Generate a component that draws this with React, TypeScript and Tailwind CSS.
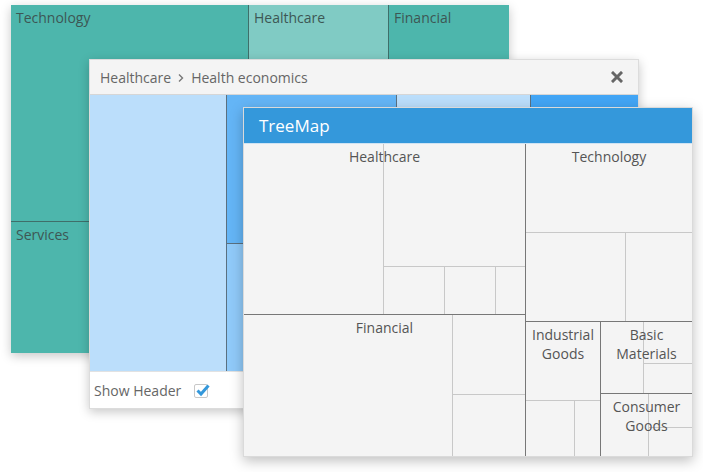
import React from 'react';

const font = { fontFamily: '"Open Sans", "Noto Sans", sans-serif' };

// group label centred on top of a treemap group
const Label = ({ text, className = '' }: { text: string; className?: string }) => (
  <div className={`pointer-events-none absolute inset-x-0 top-0 pt-[3px] text-center text-[14px] leading-[19px] text-[#555] ${className}`}>
    {text}
  </div>
);

const Leaf = ({ className = '' }: { className?: string }) => <div className={`bg-[#f4f4f4] ${className}`} />;

const TealWindow = () => (
  <div className="absolute left-[11px] top-[5px] flex h-[348px] w-[498px] gap-px bg-[#3f6f6a] shadow-[0_3px_10px_rgba(0,0,0,0.22)]">
    <div className="flex w-[237px] flex-col gap-px">
      <div className="h-[216px] bg-[#4db6ac] px-[5px] pt-[3px] text-[14px] leading-[19px] text-[#3d5754]">Technology</div>
      <div className="flex-1 bg-[#4db6ac] px-[5px] pt-[3px] text-[14px] leading-[19px] text-[#3d5754]">Services</div>
    </div>
    <div className="w-[139px] bg-[#80cbc4] px-[5px] pt-[3px] text-[14px] leading-[19px] text-[#3d5754]">Healthcare</div>
    <div className="flex-1 bg-[#4db6ac] px-[5px] pt-[3px] text-[14px] leading-[19px] text-[#3d5754]">Financial</div>
  </div>
);

const BlueWindow = () => (
  <div className="absolute left-[89px] top-[59px] flex h-[350px] w-[550px] flex-col border border-[#dcdcdc] bg-white shadow-[0_3px_10px_rgba(0,0,0,0.22)]">
    <div className="flex h-[35px] items-center justify-between border-b border-[#d6d6d6] bg-[#f4f4f4] pl-[10px] pr-[15px] text-[14px] text-[#666]">
      <div className="flex items-center gap-[6px]">
        <span>Healthcare</span>
        <svg width="8" height="10" viewBox="0 0 8 10" className="mt-px">
          <path d="M2 1.5 L5.5 5 L2 8.5" fill="none" stroke="#777" strokeWidth="1.4" />
        </svg>
        <span>Health economics</span>
      </div>
      <svg width="12" height="12" viewBox="0 0 12 12">
        <path d="M2 2 L10 10 M10 2 L2 10" stroke="#666" strokeWidth="3" strokeLinecap="square" />
      </svg>
    </div>
    <div className="flex h-[276px] gap-px bg-[#5a7080]">
      <div className="w-[136px] bg-[#bbdefb]" />
      <div className="flex w-[169px] flex-col gap-px">
        <div className="h-[148px] bg-[#64b5f6]" />
        <div className="flex-1 bg-[#90caf9]" />
      </div>
      <div className="w-[133px] bg-[#bbdefb]" />
      <div className="flex-1 bg-[#42a5f5]" />
    </div>
    <div className="flex flex-1 items-center border-t border-[#e2e2e2] pl-[4px] text-[14px] text-[#666]">
      <span>Show Header</span>
      <span className="relative ml-[13px] mt-px h-[14px] w-[14px] rounded-[2px] border border-[#c8c8c8] bg-white">
        <svg width="16" height="14" viewBox="0 0 16 14" className="absolute left-[0px] top-[-2px]">
          <path d="M2.5 7.5 L6 11 L13.5 2.5" fill="none" stroke="#3498db" strokeWidth="3" />
        </svg>
      </span>
    </div>
  </div>
);

const FrontWindow = () => (
  <div className="absolute left-[243px] top-[107px] flex h-[350px] w-[450px] flex-col border border-[#dadada] bg-[#f4f4f4] shadow-[0_4px_12px_rgba(0,0,0,0.25)]">
    <div className="flex h-[36px] items-center border-b border-[#cfe3f3] bg-[#3498db] pl-[15px] text-[17px] text-white">TreeMap</div>
    <div className="flex flex-1 gap-px bg-[#777]">
      {/* left column */}
      <div className="flex w-[281px] flex-col gap-px">
        <div className="relative flex h-[170px] gap-px bg-[#c8c8c8]">
          <Leaf className="w-[139px]" />
          <div className="flex flex-1 flex-col gap-px">
            <Leaf className="h-[122px]" />
            <div className="flex flex-1 gap-px">
              <Leaf className="w-[60px]" />
              <Leaf className="w-[50px]" />
              <Leaf className="flex-1" />
            </div>
          </div>
          <Label text="Healthcare" />
        </div>
        <div className="relative flex flex-1 gap-px bg-[#c8c8c8]">
          <Leaf className="w-[208px]" />
          <div className="flex flex-1 flex-col gap-px">
            <Leaf className="h-[79px]" />
            <Leaf className="flex-1" />
          </div>
          <Label text="Financial" />
        </div>
      </div>
      {/* right column */}
      <div className="flex flex-1 flex-col gap-px">
        <div className="relative flex h-[177px] flex-col gap-px bg-[#c8c8c8]">
          <Leaf className="h-[88px]" />
          <div className="flex flex-1 gap-px">
            <Leaf className="w-[99px]" />
            <Leaf className="flex-1" />
          </div>
          <Label text="Technology" />
        </div>
        <div className="flex flex-1 gap-px">
          <div className="relative flex w-[74px] flex-col gap-px bg-[#c8c8c8]">
            <Leaf className="h-[78px]" />
            <div className="flex flex-1 gap-px">
              <Leaf className="w-[48px]" />
              <Leaf className="flex-1" />
            </div>
            <Label text="Industrial Goods" />
          </div>
          <div className="flex flex-1 flex-col gap-px">
            <div className="relative flex h-[71px] gap-px bg-[#c8c8c8]">
              <Leaf className="w-[42px]" />
              <div className="flex flex-1 flex-col gap-px">
                <Leaf className="h-[41px]" />
                <Leaf className="flex-1" />
              </div>
              <Label text="Basic Materials" className="px-[6px]" />
            </div>
            <div className="relative flex flex-1 gap-px bg-[#c8c8c8]">
              <Leaf className="w-[47px]" />
              <div className="flex flex-1 flex-col gap-px">
                <Leaf className="h-[33px]" />
                <Leaf className="flex-1" />
              </div>
              <Label text="Consumer Goods" className="px-[8px]" />
            </div>
          </div>
        </div>
      </div>
    </div>
  </div>
);

export default function App() {
  return (
    <div className="relative h-[472px] w-[703px] overflow-hidden bg-white" style={font}>
      <TealWindow />
      <BlueWindow />
      <FrontWindow />
    </div>
  );
}
